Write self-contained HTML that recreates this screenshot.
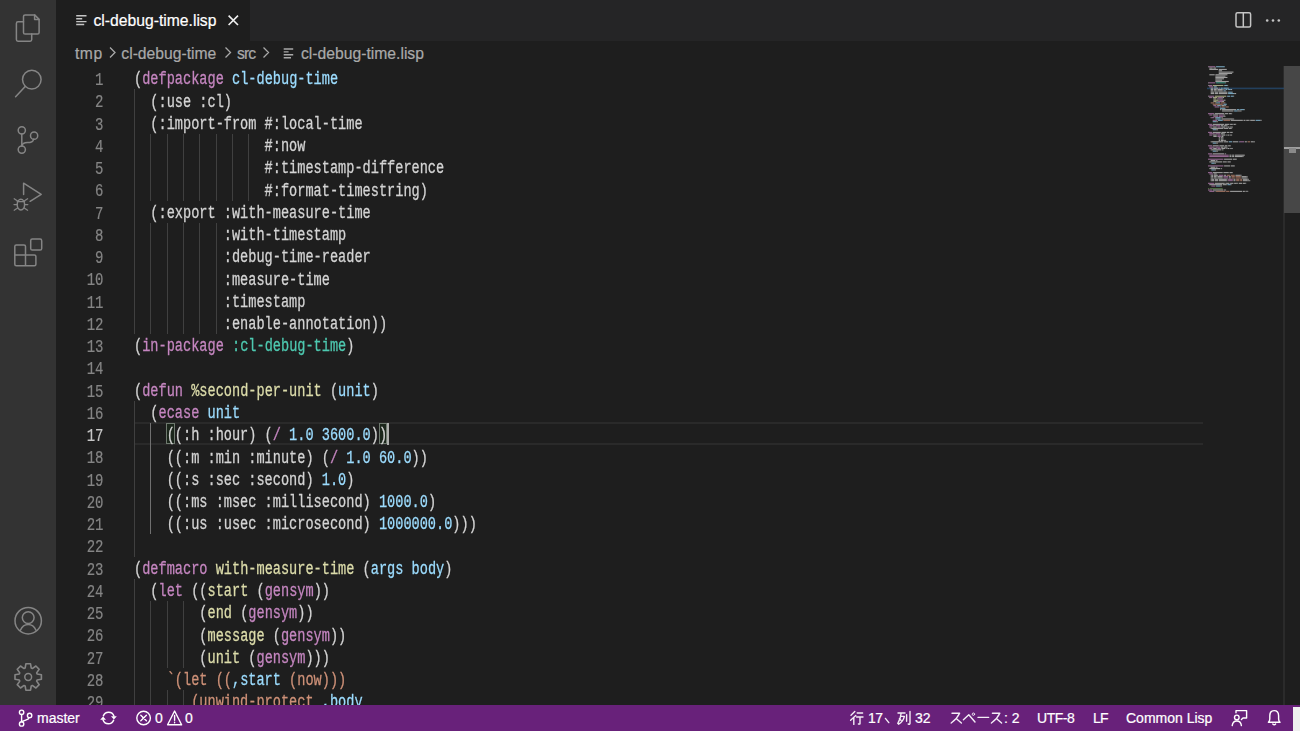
<!DOCTYPE html>
<html><head><meta charset="utf-8">
<style>
*{margin:0;padding:0;box-sizing:border-box}
html,body{width:1300px;height:731px;overflow:hidden;background:#1e1e1e}
body{position:relative;font-family:"Liberation Sans",sans-serif}
.abs{position:absolute}
#act{left:0;top:0;width:56px;height:705px;background:#333333}
#tabs{left:56px;top:0;width:1244px;height:41px;background:#252526}
#tab{left:56px;top:0;width:194px;height:41px;background:#1e1e1e}
#status{left:0;top:705px;width:1300px;height:26px;background:#68217a;color:#fff;font-size:14px}
.ui{position:absolute;font-family:"Liberation Sans",sans-serif;white-space:pre;-webkit-text-stroke:0.2px currentColor}
#code{position:absolute;-webkit-text-stroke:0.3px currentColor;left:134px;top:68.4px;width:1200px;height:700px;font-family:"Liberation Mono",monospace;font-size:18.3px;white-space:pre;color:#d4d4d4;transform-origin:0 0;transform:scaleX(0.74408)}
.ln{position:absolute;left:0;height:22.25px;line-height:22.25px}
.num{left:60px;width:43.5px;text-align:right;font-family:"Liberation Mono",monospace;color:#858585;font-size:17.5px;transform-origin:100% 0;transform:scaleX(0.80);-webkit-text-stroke:0.2px currentColor}
.k{color:#c586c0}.b{color:#9cdcfe}.t{color:#4ec9b0}.y{color:#dcdcaa}.o{color:#ce9178}.n{color:#9cdcfe}
svg{position:absolute;overflow:visible}
</style></head><body>
<div id="act" class="abs"></div>
<div id="tabs" class="abs"></div>
<div id="tab" class="abs"></div>
<div class="ui" style="left:93.5px;top:10.6px;font-size:15.7px;color:#ffffff;line-height:20px">cl-debug-time.lisp</div>
<div class="ui" style="left:75px;top:43.8px;font-size:15.7px;color:#a9a9a9;line-height:20px;letter-spacing:0.5px">tmp</div>
<div class="ui" style="left:121.3px;top:43.8px;font-size:15.7px;color:#a9a9a9;line-height:20px">cl-debug-time</div>
<div class="ui" style="left:237px;top:43.8px;font-size:15.7px;color:#a9a9a9;line-height:20px;letter-spacing:-0.9px">src</div>
<div class="ui" style="left:301px;top:43.8px;font-size:15.7px;color:#a9a9a9;line-height:20px">cl-debug-time.lisp</div>

<svg width="56" height="705" style="left:0;top:0" fill="none" stroke="#858585" stroke-width="1.5" stroke-linejoin="round" stroke-linecap="round">
 <!-- files -->
 <path d="M23.5,21.8 H18 Q16.4,21.8 16.4,23.4 V39.6 Q16.4,41.2 18,41.2 H30.1 Q31.7,41.2 31.7,39.6 V34.1"/>
 <path d="M25.1,14.9 H34.6 L39.1,19.4 V32.5 Q39.1,34.1 37.5,34.1 H25.1 Q23.5,34.1 23.5,32.5 V16.5 Q23.5,14.9 25.1,14.9 Z"/>
 <path d="M34.6,15 V19.6 H39" />
 <!-- search -->
 <circle cx="31.8" cy="79.6" r="9.3"/>
 <path d="M25.2,86.4 L15.6,96.8"/>
 <!-- scm -->
 <circle cx="21.8" cy="130.3" r="3.6"/>
 <circle cx="21.8" cy="149.6" r="3.6"/>
 <circle cx="34.1" cy="135.7" r="3.6"/>
 <path d="M21.8,134 V146"/>
 <path d="M33.6,139.3 C33,142 30.5,142.6 27.5,142.6 C24,142.6 22.3,143.8 21.8,146"/>
 <!-- debug -->
 <path d="M23.6,194.6 V183.2 L41.2,194.3 L30.1,201.3"/>
 <ellipse cx="20.9" cy="204.6" rx="3.7" ry="5.3"/>
 <path d="M17.2,201.6 H24.6 M14.2,198.8 L17.6,201 M27.6,198.8 L24.2,201 M14,204.6 H17 M27.8,204.6 H24.8 M14.2,210.2 L17.6,208 M27.6,210.2 L24.2,208" stroke-width="1.3"/>
 <!-- extensions -->
 <path d="M16.3,244.9 H24 Q25.5,244.9 25.5,246.4 V255 H34.4 Q35.9,255 35.9,256.5 V264.2 Q35.9,265.7 34.4,265.7 H16.3 Q14.8,265.7 14.8,264.2 V246.4 Q14.8,244.9 16.3,244.9 Z M14.8,255 H25.5 V265.7"/>
 <rect x="30.7" y="239.1" width="11" height="11" rx="1.6"/>
 <!-- account -->
 <circle cx="28.2" cy="620.7" r="13.2"/>
 <circle cx="28.2" cy="617.6" r="5.9"/>
 <path d="M20.4,630.2 C22,626.6 25,624.6 28.2,624.6 C31.4,624.6 34.4,626.6 36,630.2"/>
 <!-- gear -->
 <path d="M25.14,668.11 L25.87,663.80 L30.53,663.80 L31.26,668.11 L32.32,668.55 L35.89,666.02 L39.18,669.31 L36.65,672.88 L37.09,673.94 L41.40,674.67 L41.40,679.33 L37.09,680.06 L36.65,681.12 L39.18,684.69 L35.89,687.98 L32.32,685.45 L31.26,685.89 L30.53,690.20 L25.87,690.20 L25.14,685.89 L24.08,685.45 L20.51,687.98 L17.22,684.69 L19.75,681.12 L19.31,680.06 L15.00,679.33 L15.00,674.67 L19.31,673.94 L19.75,672.88 L17.22,669.31 L20.51,666.02 L24.08,668.55Z" stroke-width="1.6"/>
 <circle cx="28.2" cy="677" r="3.4"/>
</svg>
<!-- tab icons -->
<svg width="1300" height="70" style="left:0;top:0" fill="none" stroke-linecap="butt">
 <path d="M76.2,15.8 H86.5 M76.2,18.7 H82.2 M76.2,21.6 H86.5 M76.2,24.5 H84.2" stroke="#c5c5c5" stroke-width="1.4"/>
 <path d="M228.6,15.6 L238,25 M238,15.6 L228.6,25" stroke="#f0f0f0" stroke-width="1.6"/>
 <path d="M283.7,49 H293.2 M283.7,51.9 H288.6 M283.7,54.8 H293.2 M283.7,57.7 H291" stroke="#a9a9a9" stroke-width="1.4"/>
 <path d="M110,47.5 L115,52.5 L110,57.5 M225.5,47.5 L230.5,52.5 L225.5,57.5 M263.5,47.5 L268.5,52.5 L263.5,57.5" stroke="#a9a9a9" stroke-width="1.3"/>
 <rect x="1236" y="12.7" width="14.6" height="14.4" rx="1.5" stroke="#c5c5c5" stroke-width="1.5"/>
 <path d="M1243.3,12.7 V27.1" stroke="#c5c5c5" stroke-width="1.5"/>
 <circle cx="1267.2" cy="20.5" r="1.3" fill="#c5c5c5"/>
 <circle cx="1273" cy="20.5" r="1.3" fill="#c5c5c5"/>
 <circle cx="1278.8" cy="20.5" r="1.3" fill="#c5c5c5"/>
</svg>

<!-- current line highlight -->
<div class="abs" style="left:134.5px;top:422.4px;width:1068px;height:22.4px;border-top:2px solid #2a2a2a;border-bottom:2px solid #2a2a2a"></div>
<div class="abs" style="left:166.2px;top:423px;width:8.6px;height:21.4px;border:1px solid #6f7a6f;background:#1b261b"></div>
<div class="abs" style="left:378.8px;top:423px;width:8.6px;height:21.4px;border:1px solid #6f7a6f;background:#1b261b"></div>
<div class="abs" style="left:387.2px;top:423px;width:2px;height:21.6px;background:#aeafad"></div>
<!-- scrollbar -->
<div class="abs" style="left:1283px;top:66px;width:2px;height:639px;background:#2b2b2b"></div>
<div class="abs" style="left:1284px;top:66px;width:16px;height:146.5px;background:#474747"></div>
<div class="abs" style="left:1284px;top:147px;width:16px;height:1.5px;background:#a0a0a0"></div>
<div class="abs" style="left:1288.5px;top:147.5px;width:7px;height:5px;background:#8a8a8a"></div>
<svg width="1300" height="731" style="left:0;top:0;opacity:0.7;filter:blur(0.3px)"><rect x="1207" y="87.6" width="77" height="1.6" fill="#264f78" opacity="1.4"/><rect x="1208.00" y="66.20" width="0.67" height="1.1" fill="#d4d4d4"/><rect x="1208.67" y="66.20" width="6.70" height="1.1" fill="#c586c0"/><rect x="1216.04" y="66.20" width="8.71" height="1.1" fill="#9cdcfe"/><rect x="1209.34" y="67.54" width="3.35" height="1.1" fill="#d4d4d4"/><rect x="1213.36" y="67.54" width="2.68" height="1.1" fill="#d4d4d4"/><rect x="1209.34" y="68.88" width="8.71" height="1.1" fill="#d4d4d4"/><rect x="1218.72" y="68.88" width="8.04" height="1.1" fill="#d4d4d4"/><rect x="1218.72" y="70.22" width="3.35" height="1.1" fill="#d4d4d4"/><rect x="1218.72" y="71.56" width="14.74" height="1.1" fill="#d4d4d4"/><rect x="1218.72" y="72.90" width="13.40" height="1.1" fill="#d4d4d4"/><rect x="1209.34" y="74.24" width="5.36" height="1.1" fill="#d4d4d4"/><rect x="1215.37" y="74.24" width="12.06" height="1.1" fill="#d4d4d4"/><rect x="1215.37" y="75.58" width="10.05" height="1.1" fill="#d4d4d4"/><rect x="1215.37" y="76.92" width="12.06" height="1.1" fill="#d4d4d4"/><rect x="1215.37" y="78.26" width="8.71" height="1.1" fill="#d4d4d4"/><rect x="1215.37" y="79.60" width="6.70" height="1.1" fill="#d4d4d4"/><rect x="1215.37" y="80.94" width="13.40" height="1.1" fill="#d4d4d4"/><rect x="1208.00" y="82.28" width="0.67" height="1.1" fill="#d4d4d4"/><rect x="1208.67" y="82.28" width="6.70" height="1.1" fill="#c586c0"/><rect x="1216.04" y="82.28" width="9.38" height="1.1" fill="#4ec9b0"/><rect x="1225.42" y="82.28" width="0.67" height="1.1" fill="#d4d4d4"/><rect x="1208.00" y="84.96" width="0.67" height="1.1" fill="#d4d4d4"/><rect x="1208.67" y="84.96" width="3.35" height="1.1" fill="#c586c0"/><rect x="1212.69" y="84.96" width="10.72" height="1.1" fill="#dcdcaa"/><rect x="1224.08" y="84.96" width="0.67" height="1.1" fill="#d4d4d4"/><rect x="1224.75" y="84.96" width="2.68" height="1.1" fill="#9cdcfe"/><rect x="1227.43" y="84.96" width="0.67" height="1.1" fill="#d4d4d4"/><rect x="1209.34" y="86.30" width="0.67" height="1.1" fill="#d4d4d4"/><rect x="1210.01" y="86.30" width="3.35" height="1.1" fill="#c586c0"/><rect x="1214.03" y="86.30" width="2.68" height="1.1" fill="#9cdcfe"/><rect x="1210.68" y="87.64" width="2.68" height="1.1" fill="#d4d4d4"/><rect x="1214.03" y="87.64" width="4.02" height="1.1" fill="#d4d4d4"/><rect x="1218.72" y="87.64" width="0.67" height="1.1" fill="#d4d4d4"/><rect x="1219.39" y="87.64" width="0.67" height="1.1" fill="#c586c0"/><rect x="1220.73" y="87.64" width="2.01" height="1.1" fill="#9cdcfe"/><rect x="1223.41" y="87.64" width="4.02" height="1.1" fill="#9cdcfe"/><rect x="1227.43" y="87.64" width="1.34" height="1.1" fill="#d4d4d4"/><rect x="1210.68" y="88.98" width="2.68" height="1.1" fill="#d4d4d4"/><rect x="1214.03" y="88.98" width="2.68" height="1.1" fill="#d4d4d4"/><rect x="1217.38" y="88.98" width="5.36" height="1.1" fill="#d4d4d4"/><rect x="1223.41" y="88.98" width="0.67" height="1.1" fill="#d4d4d4"/><rect x="1224.08" y="88.98" width="0.67" height="1.1" fill="#c586c0"/><rect x="1225.42" y="88.98" width="2.01" height="1.1" fill="#9cdcfe"/><rect x="1228.10" y="88.98" width="2.68" height="1.1" fill="#9cdcfe"/><rect x="1230.78" y="88.98" width="1.34" height="1.1" fill="#d4d4d4"/><rect x="1210.68" y="90.32" width="2.68" height="1.1" fill="#d4d4d4"/><rect x="1214.03" y="90.32" width="2.68" height="1.1" fill="#d4d4d4"/><rect x="1217.38" y="90.32" width="5.36" height="1.1" fill="#d4d4d4"/><rect x="1223.41" y="90.32" width="2.01" height="1.1" fill="#9cdcfe"/><rect x="1225.42" y="90.32" width="0.67" height="1.1" fill="#d4d4d4"/><rect x="1210.68" y="91.66" width="3.35" height="1.1" fill="#d4d4d4"/><rect x="1214.70" y="91.66" width="3.35" height="1.1" fill="#d4d4d4"/><rect x="1218.72" y="91.66" width="8.71" height="1.1" fill="#d4d4d4"/><rect x="1228.10" y="91.66" width="4.02" height="1.1" fill="#9cdcfe"/><rect x="1232.12" y="91.66" width="0.67" height="1.1" fill="#d4d4d4"/><rect x="1210.68" y="93.00" width="3.35" height="1.1" fill="#d4d4d4"/><rect x="1214.70" y="93.00" width="3.35" height="1.1" fill="#d4d4d4"/><rect x="1218.72" y="93.00" width="8.71" height="1.1" fill="#d4d4d4"/><rect x="1228.10" y="93.00" width="6.03" height="1.1" fill="#9cdcfe"/><rect x="1234.13" y="93.00" width="2.01" height="1.1" fill="#d4d4d4"/><rect x="1208.00" y="95.68" width="0.67" height="1.1" fill="#d4d4d4"/><rect x="1208.67" y="95.68" width="5.36" height="1.1" fill="#c586c0"/><rect x="1214.70" y="95.68" width="11.39" height="1.1" fill="#dcdcaa"/><rect x="1226.76" y="95.68" width="0.67" height="1.1" fill="#d4d4d4"/><rect x="1227.43" y="95.68" width="2.68" height="1.1" fill="#9cdcfe"/><rect x="1230.78" y="95.68" width="2.68" height="1.1" fill="#9cdcfe"/><rect x="1233.46" y="95.68" width="0.67" height="1.1" fill="#d4d4d4"/><rect x="1209.34" y="97.02" width="0.67" height="1.1" fill="#d4d4d4"/><rect x="1210.01" y="97.02" width="2.01" height="1.1" fill="#c586c0"/><rect x="1212.69" y="97.02" width="1.34" height="1.1" fill="#d4d4d4"/><rect x="1214.03" y="97.02" width="3.35" height="1.1" fill="#dcdcaa"/><rect x="1218.05" y="97.02" width="0.67" height="1.1" fill="#d4d4d4"/><rect x="1218.72" y="97.02" width="4.02" height="1.1" fill="#c586c0"/><rect x="1222.74" y="97.02" width="1.34" height="1.1" fill="#d4d4d4"/><rect x="1213.36" y="98.36" width="0.67" height="1.1" fill="#d4d4d4"/><rect x="1214.03" y="98.36" width="2.01" height="1.1" fill="#dcdcaa"/><rect x="1216.71" y="98.36" width="0.67" height="1.1" fill="#d4d4d4"/><rect x="1217.38" y="98.36" width="4.02" height="1.1" fill="#c586c0"/><rect x="1221.40" y="98.36" width="1.34" height="1.1" fill="#d4d4d4"/><rect x="1213.36" y="99.70" width="0.67" height="1.1" fill="#d4d4d4"/><rect x="1214.03" y="99.70" width="4.69" height="1.1" fill="#dcdcaa"/><rect x="1219.39" y="99.70" width="0.67" height="1.1" fill="#d4d4d4"/><rect x="1220.06" y="99.70" width="4.02" height="1.1" fill="#c586c0"/><rect x="1224.08" y="99.70" width="1.34" height="1.1" fill="#d4d4d4"/><rect x="1213.36" y="101.04" width="0.67" height="1.1" fill="#d4d4d4"/><rect x="1214.03" y="101.04" width="2.68" height="1.1" fill="#dcdcaa"/><rect x="1217.38" y="101.04" width="0.67" height="1.1" fill="#d4d4d4"/><rect x="1218.05" y="101.04" width="4.02" height="1.1" fill="#c586c0"/><rect x="1222.07" y="101.04" width="2.01" height="1.1" fill="#d4d4d4"/><rect x="1210.68" y="102.38" width="3.35" height="1.1" fill="#ce9178"/><rect x="1214.70" y="102.38" width="1.34" height="1.1" fill="#ce9178"/><rect x="1216.04" y="102.38" width="4.02" height="1.1" fill="#9cdcfe"/><rect x="1220.73" y="102.38" width="4.69" height="1.1" fill="#ce9178"/><rect x="1212.69" y="103.72" width="10.05" height="1.1" fill="#ce9178"/><rect x="1223.41" y="103.72" width="3.35" height="1.1" fill="#9cdcfe"/><rect x="1213.36" y="105.06" width="2.68" height="1.1" fill="#c586c0"/><rect x="1216.71" y="105.06" width="0.67" height="1.1" fill="#d4d4d4"/><rect x="1217.38" y="105.06" width="0.67" height="1.1" fill="#d4d4d4"/><rect x="1218.05" y="105.06" width="2.68" height="1.1" fill="#9cdcfe"/><rect x="1221.40" y="105.06" width="2.68" height="1.1" fill="#d4d4d4"/><rect x="1224.08" y="105.06" width="0.67" height="1.1" fill="#d4d4d4"/><rect x="1224.75" y="105.06" width="0.67" height="1.1" fill="#d4d4d4"/><rect x="1225.42" y="105.06" width="0.67" height="1.1" fill="#d4d4d4"/><rect x="1214.70" y="106.40" width="4.69" height="1.1" fill="#c586c0"/><rect x="1220.06" y="106.40" width="0.67" height="1.1" fill="#d4d4d4"/><rect x="1221.40" y="106.40" width="3.35" height="1.1" fill="#ce9178"/><rect x="1225.42" y="106.40" width="3.35" height="1.1" fill="#ce9178"/><rect x="1220.06" y="107.74" width="5.36" height="1.1" fill="#9cdcfe"/><rect x="1220.06" y="109.08" width="1.34" height="1.1" fill="#d4d4d4"/><rect x="1222.07" y="109.08" width="14.07" height="1.1" fill="#d4d4d4"/><rect x="1236.81" y="109.08" width="2.68" height="1.1" fill="#9cdcfe"/><rect x="1240.16" y="109.08" width="4.02" height="1.1" fill="#9cdcfe"/><rect x="1244.18" y="109.08" width="0.67" height="1.1" fill="#d4d4d4"/><rect x="1222.07" y="110.42" width="11.39" height="1.1" fill="#d4d4d4"/><rect x="1234.13" y="110.42" width="3.35" height="1.1" fill="#9cdcfe"/><rect x="1237.48" y="110.42" width="0.67" height="1.1" fill="#d4d4d4"/><rect x="1238.15" y="110.42" width="0.67" height="1.1" fill="#d4d4d4"/><rect x="1238.82" y="110.42" width="0.67" height="1.1" fill="#d4d4d4"/><rect x="1239.49" y="110.42" width="0.67" height="1.1" fill="#d4d4d4"/><rect x="1240.16" y="110.42" width="0.67" height="1.1" fill="#d4d4d4"/><rect x="1240.83" y="110.42" width="0.67" height="1.1" fill="#d4d4d4"/><rect x="1208.00" y="113.10" width="6.03" height="1.1" fill="#c586c0"/><rect x="1214.70" y="113.10" width="9.38" height="1.1" fill="#d4d4d4"/><rect x="1224.75" y="113.10" width="3.35" height="1.1" fill="#d4d4d4"/><rect x="1228.77" y="113.10" width="2.68" height="1.1" fill="#d4d4d4"/><rect x="1231.45" y="113.10" width="0.67" height="1.1" fill="#d4d4d4"/><rect x="1209.34" y="114.44" width="2.68" height="1.1" fill="#c586c0"/><rect x="1212.69" y="114.44" width="0.67" height="1.1" fill="#d4d4d4"/><rect x="1213.36" y="114.44" width="4.69" height="1.1" fill="#d4d4d4"/><rect x="1218.72" y="114.44" width="4.69" height="1.1" fill="#c586c0"/><rect x="1223.41" y="114.44" width="0.67" height="1.1" fill="#d4d4d4"/><rect x="1224.08" y="114.44" width="0.67" height="1.1" fill="#d4d4d4"/><rect x="1213.36" y="115.78" width="4.69" height="1.1" fill="#c586c0"/><rect x="1218.72" y="115.78" width="4.69" height="1.1" fill="#c586c0"/><rect x="1223.41" y="115.78" width="0.67" height="1.1" fill="#d4d4d4"/><rect x="1224.08" y="115.78" width="0.67" height="1.1" fill="#d4d4d4"/><rect x="1224.75" y="115.78" width="0.67" height="1.1" fill="#d4d4d4"/><rect x="1210.68" y="117.12" width="0.67" height="1.1" fill="#d4d4d4"/><rect x="1211.35" y="117.12" width="2.68" height="1.1" fill="#c586c0"/><rect x="1214.70" y="117.12" width="0.67" height="1.1" fill="#d4d4d4"/><rect x="1215.37" y="117.12" width="0.67" height="1.1" fill="#d4d4d4"/><rect x="1216.04" y="117.12" width="4.69" height="1.1" fill="#9cdcfe"/><rect x="1221.40" y="117.12" width="0.67" height="1.1" fill="#d4d4d4"/><rect x="1222.07" y="117.12" width="0.67" height="1.1" fill="#d4d4d4"/><rect x="1215.37" y="118.46" width="0.67" height="1.1" fill="#d4d4d4"/><rect x="1216.04" y="118.46" width="4.69" height="1.1" fill="#9cdcfe"/><rect x="1221.40" y="118.46" width="11.39" height="1.1" fill="#d4d4d4"/><rect x="1232.79" y="118.46" width="0.67" height="1.1" fill="#d4d4d4"/><rect x="1233.46" y="118.46" width="0.67" height="1.1" fill="#d4d4d4"/><rect x="1212.69" y="119.80" width="4.69" height="1.1" fill="#c586c0"/><rect x="1218.05" y="119.80" width="4.69" height="1.1" fill="#9cdcfe"/><rect x="1223.41" y="119.80" width="6.70" height="1.1" fill="#ce9178"/><rect x="1230.78" y="119.80" width="12.06" height="1.1" fill="#d4d4d4"/><rect x="1243.51" y="119.80" width="2.01" height="1.1" fill="#d4d4d4"/><rect x="1246.19" y="119.80" width="2.68" height="1.1" fill="#d4d4d4"/><rect x="1248.87" y="119.80" width="0.67" height="1.1" fill="#d4d4d4"/><rect x="1250.21" y="119.80" width="4.69" height="1.1" fill="#d4d4d4"/><rect x="1255.57" y="119.80" width="4.69" height="1.1" fill="#9cdcfe"/><rect x="1260.26" y="119.80" width="0.67" height="1.1" fill="#d4d4d4"/><rect x="1260.93" y="119.80" width="0.67" height="1.1" fill="#d4d4d4"/><rect x="1212.69" y="121.14" width="3.35" height="1.1" fill="#9cdcfe"/><rect x="1216.04" y="121.14" width="0.67" height="1.1" fill="#d4d4d4"/><rect x="1216.71" y="121.14" width="0.67" height="1.1" fill="#d4d4d4"/><rect x="1217.38" y="121.14" width="0.67" height="1.1" fill="#d4d4d4"/><rect x="1208.00" y="123.82" width="4.02" height="1.1" fill="#c586c0"/><rect x="1212.69" y="123.82" width="11.39" height="1.1" fill="#d4d4d4"/><rect x="1224.75" y="123.82" width="4.69" height="1.1" fill="#d4d4d4"/><rect x="1230.11" y="123.82" width="2.68" height="1.1" fill="#d4d4d4"/><rect x="1233.46" y="123.82" width="2.01" height="1.1" fill="#d4d4d4"/><rect x="1235.47" y="123.82" width="0.67" height="1.1" fill="#d4d4d4"/><rect x="1209.34" y="125.16" width="5.36" height="1.1" fill="#c586c0"/><rect x="1215.37" y="125.16" width="4.69" height="1.1" fill="#c586c0"/><rect x="1220.73" y="125.16" width="2.68" height="1.1" fill="#d4d4d4"/><rect x="1224.08" y="125.16" width="2.01" height="1.1" fill="#d4d4d4"/><rect x="1226.09" y="125.16" width="0.67" height="1.1" fill="#d4d4d4"/><rect x="1226.76" y="125.16" width="0.67" height="1.1" fill="#d4d4d4"/><rect x="1209.34" y="126.50" width="2.68" height="1.1" fill="#c586c0"/><rect x="1212.69" y="126.50" width="0.67" height="1.1" fill="#d4d4d4"/><rect x="1213.36" y="126.50" width="3.35" height="1.1" fill="#d4d4d4"/><rect x="1217.38" y="126.50" width="3.35" height="1.1" fill="#c586c0"/><rect x="1221.40" y="126.50" width="4.02" height="1.1" fill="#d4d4d4"/><rect x="1226.09" y="126.50" width="0.67" height="1.1" fill="#d4d4d4"/><rect x="1227.43" y="126.50" width="2.01" height="1.1" fill="#d4d4d4"/><rect x="1230.11" y="126.50" width="0.67" height="1.1" fill="#d4d4d4"/><rect x="1230.78" y="126.50" width="0.67" height="1.1" fill="#d4d4d4"/><rect x="1231.45" y="126.50" width="0.67" height="1.1" fill="#d4d4d4"/><rect x="1232.12" y="126.50" width="0.67" height="1.1" fill="#d4d4d4"/><rect x="1210.68" y="127.84" width="0.67" height="1.1" fill="#d4d4d4"/><rect x="1211.35" y="127.84" width="12.06" height="1.1" fill="#d4d4d4"/><rect x="1224.08" y="127.84" width="4.02" height="1.1" fill="#d4d4d4"/><rect x="1228.77" y="127.84" width="2.68" height="1.1" fill="#d4d4d4"/><rect x="1231.45" y="127.84" width="0.67" height="1.1" fill="#d4d4d4"/><rect x="1212.69" y="129.18" width="3.35" height="1.1" fill="#9cdcfe"/><rect x="1216.04" y="129.18" width="0.67" height="1.1" fill="#d4d4d4"/><rect x="1216.71" y="129.18" width="0.67" height="1.1" fill="#d4d4d4"/><rect x="1217.38" y="129.18" width="0.67" height="1.1" fill="#d4d4d4"/><rect x="1208.00" y="131.86" width="4.02" height="1.1" fill="#c586c0"/><rect x="1212.69" y="131.86" width="8.04" height="1.1" fill="#d4d4d4"/><rect x="1221.40" y="131.86" width="4.69" height="1.1" fill="#d4d4d4"/><rect x="1226.76" y="131.86" width="2.68" height="1.1" fill="#d4d4d4"/><rect x="1230.11" y="131.86" width="2.01" height="1.1" fill="#d4d4d4"/><rect x="1232.12" y="131.86" width="0.67" height="1.1" fill="#d4d4d4"/><rect x="1209.34" y="133.20" width="5.36" height="1.1" fill="#c586c0"/><rect x="1215.37" y="133.20" width="4.69" height="1.1" fill="#c586c0"/><rect x="1220.73" y="133.20" width="2.68" height="1.1" fill="#d4d4d4"/><rect x="1223.41" y="133.20" width="0.67" height="1.1" fill="#d4d4d4"/><rect x="1224.08" y="133.20" width="0.67" height="1.1" fill="#d4d4d4"/><rect x="1209.34" y="134.54" width="2.68" height="1.1" fill="#c586c0"/><rect x="1212.69" y="134.54" width="0.67" height="1.1" fill="#d4d4d4"/><rect x="1213.36" y="134.54" width="3.35" height="1.1" fill="#d4d4d4"/><rect x="1217.38" y="134.54" width="3.35" height="1.1" fill="#c586c0"/><rect x="1221.40" y="134.54" width="4.02" height="1.1" fill="#d4d4d4"/><rect x="1226.09" y="134.54" width="0.67" height="1.1" fill="#d4d4d4"/><rect x="1227.43" y="134.54" width="2.01" height="1.1" fill="#d4d4d4"/><rect x="1230.11" y="134.54" width="0.67" height="1.1" fill="#d4d4d4"/><rect x="1230.78" y="134.54" width="0.67" height="1.1" fill="#d4d4d4"/><rect x="1231.45" y="134.54" width="0.67" height="1.1" fill="#d4d4d4"/><rect x="1213.36" y="135.88" width="3.35" height="1.1" fill="#d4d4d4"/><rect x="1217.38" y="135.88" width="3.35" height="1.1" fill="#c586c0"/><rect x="1221.40" y="135.88" width="2.01" height="1.1" fill="#d4d4d4"/><rect x="1218.72" y="137.22" width="1.34" height="1.1" fill="#d4d4d4"/><rect x="1220.73" y="137.22" width="2.01" height="1.1" fill="#d4d4d4"/><rect x="1222.74" y="137.22" width="0.67" height="1.1" fill="#d4d4d4"/><rect x="1218.72" y="138.56" width="1.34" height="1.1" fill="#d4d4d4"/><rect x="1220.73" y="138.56" width="2.01" height="1.1" fill="#d4d4d4"/><rect x="1222.74" y="138.56" width="0.67" height="1.1" fill="#d4d4d4"/><rect x="1218.72" y="139.90" width="1.34" height="1.1" fill="#d4d4d4"/><rect x="1220.73" y="139.90" width="2.68" height="1.1" fill="#d4d4d4"/><rect x="1223.41" y="139.90" width="0.67" height="1.1" fill="#d4d4d4"/><rect x="1224.08" y="139.90" width="0.67" height="1.1" fill="#d4d4d4"/><rect x="1224.75" y="139.90" width="0.67" height="1.1" fill="#d4d4d4"/><rect x="1225.42" y="139.90" width="0.67" height="1.1" fill="#d4d4d4"/><rect x="1210.68" y="141.24" width="0.67" height="1.1" fill="#d4d4d4"/><rect x="1211.35" y="141.24" width="12.06" height="1.1" fill="#d4d4d4"/><rect x="1224.08" y="141.24" width="4.02" height="1.1" fill="#d4d4d4"/><rect x="1228.77" y="141.24" width="3.35" height="1.1" fill="#9cdcfe"/><rect x="1232.79" y="141.24" width="5.36" height="1.1" fill="#d4d4d4"/><rect x="1238.82" y="141.24" width="0.67" height="1.1" fill="#9cdcfe"/><rect x="1239.49" y="141.24" width="4.69" height="1.1" fill="#c586c0"/><rect x="1244.85" y="141.24" width="2.01" height="1.1" fill="#d4d4d4"/><rect x="1247.53" y="141.24" width="2.68" height="1.1" fill="#ce9178"/><rect x="1250.88" y="141.24" width="2.68" height="1.1" fill="#d4d4d4"/><rect x="1253.56" y="141.24" width="0.67" height="1.1" fill="#d4d4d4"/><rect x="1254.23" y="141.24" width="0.67" height="1.1" fill="#d4d4d4"/><rect x="1212.69" y="142.58" width="3.35" height="1.1" fill="#9cdcfe"/><rect x="1216.04" y="142.58" width="0.67" height="1.1" fill="#d4d4d4"/><rect x="1216.71" y="142.58" width="0.67" height="1.1" fill="#d4d4d4"/><rect x="1217.38" y="142.58" width="0.67" height="1.1" fill="#d4d4d4"/><rect x="1208.00" y="145.26" width="4.02" height="1.1" fill="#c586c0"/><rect x="1212.69" y="145.26" width="6.03" height="1.1" fill="#d4d4d4"/><rect x="1219.39" y="145.26" width="4.69" height="1.1" fill="#d4d4d4"/><rect x="1224.75" y="145.26" width="2.68" height="1.1" fill="#d4d4d4"/><rect x="1228.10" y="145.26" width="2.01" height="1.1" fill="#d4d4d4"/><rect x="1230.11" y="145.26" width="0.67" height="1.1" fill="#d4d4d4"/><rect x="1209.34" y="146.60" width="5.36" height="1.1" fill="#c586c0"/><rect x="1215.37" y="146.60" width="4.69" height="1.1" fill="#c586c0"/><rect x="1220.73" y="146.60" width="2.68" height="1.1" fill="#d4d4d4"/><rect x="1224.08" y="146.60" width="2.01" height="1.1" fill="#d4d4d4"/><rect x="1226.09" y="146.60" width="0.67" height="1.1" fill="#d4d4d4"/><rect x="1226.76" y="146.60" width="0.67" height="1.1" fill="#d4d4d4"/><rect x="1209.34" y="147.94" width="2.68" height="1.1" fill="#c586c0"/><rect x="1212.69" y="147.94" width="0.67" height="1.1" fill="#d4d4d4"/><rect x="1213.36" y="147.94" width="3.35" height="1.1" fill="#d4d4d4"/><rect x="1217.38" y="147.94" width="3.35" height="1.1" fill="#c586c0"/><rect x="1221.40" y="147.94" width="4.02" height="1.1" fill="#d4d4d4"/><rect x="1226.09" y="147.94" width="0.67" height="1.1" fill="#d4d4d4"/><rect x="1227.43" y="147.94" width="2.01" height="1.1" fill="#d4d4d4"/><rect x="1230.11" y="147.94" width="0.67" height="1.1" fill="#d4d4d4"/><rect x="1230.78" y="147.94" width="0.67" height="1.1" fill="#d4d4d4"/><rect x="1231.45" y="147.94" width="0.67" height="1.1" fill="#d4d4d4"/><rect x="1232.12" y="147.94" width="0.67" height="1.1" fill="#d4d4d4"/><rect x="1210.68" y="149.28" width="0.67" height="1.1" fill="#d4d4d4"/><rect x="1211.35" y="149.28" width="10.05" height="1.1" fill="#d4d4d4"/><rect x="1222.07" y="149.28" width="0.67" height="1.1" fill="#d4d4d4"/><rect x="1222.74" y="149.28" width="0.67" height="1.1" fill="#d4d4d4"/><rect x="1212.69" y="150.62" width="3.35" height="1.1" fill="#9cdcfe"/><rect x="1216.04" y="150.62" width="0.67" height="1.1" fill="#d4d4d4"/><rect x="1216.71" y="150.62" width="0.67" height="1.1" fill="#d4d4d4"/><rect x="1217.38" y="150.62" width="0.67" height="1.1" fill="#d4d4d4"/><rect x="1208.00" y="153.30" width="4.02" height="1.1" fill="#c586c0"/><rect x="1212.69" y="153.30" width="11.39" height="1.1" fill="#d4d4d4"/><rect x="1224.75" y="153.30" width="0.67" height="1.1" fill="#d4d4d4"/><rect x="1225.42" y="153.30" width="0.67" height="1.1" fill="#d4d4d4"/><rect x="1209.34" y="154.64" width="19.43" height="1.1" fill="#c586c0"/><rect x="1229.44" y="154.64" width="2.01" height="1.1" fill="#d4d4d4"/><rect x="1232.12" y="154.64" width="2.01" height="1.1" fill="#d4d4d4"/><rect x="1234.80" y="154.64" width="9.38" height="1.1" fill="#d4d4d4"/><rect x="1244.18" y="154.64" width="0.67" height="1.1" fill="#d4d4d4"/><rect x="1209.34" y="155.98" width="19.43" height="1.1" fill="#c586c0"/><rect x="1229.44" y="155.98" width="2.01" height="1.1" fill="#d4d4d4"/><rect x="1232.12" y="155.98" width="2.01" height="1.1" fill="#d4d4d4"/><rect x="1234.80" y="155.98" width="7.37" height="1.1" fill="#d4d4d4"/><rect x="1242.17" y="155.98" width="0.67" height="1.1" fill="#d4d4d4"/><rect x="1242.84" y="155.98" width="0.67" height="1.1" fill="#d4d4d4"/><rect x="1208.00" y="158.66" width="15.41" height="1.1" fill="#c586c0"/><rect x="1224.08" y="158.66" width="8.04" height="1.1" fill="#d4d4d4"/><rect x="1232.79" y="158.66" width="3.35" height="1.1" fill="#d4d4d4"/><rect x="1236.14" y="158.66" width="0.67" height="1.1" fill="#d4d4d4"/><rect x="1210.68" y="160.00" width="4.69" height="1.1" fill="#d4d4d4"/><rect x="1216.04" y="160.00" width="0.67" height="1.1" fill="#d4d4d4"/><rect x="1216.71" y="160.00" width="0.67" height="1.1" fill="#d4d4d4"/><rect x="1209.34" y="161.34" width="0.67" height="1.1" fill="#d4d4d4"/><rect x="1210.01" y="161.34" width="12.06" height="1.1" fill="#d4d4d4"/><rect x="1222.74" y="161.34" width="4.02" height="1.1" fill="#d4d4d4"/><rect x="1227.43" y="161.34" width="2.68" height="1.1" fill="#d4d4d4"/><rect x="1230.11" y="161.34" width="0.67" height="1.1" fill="#d4d4d4"/><rect x="1211.35" y="162.68" width="3.35" height="1.1" fill="#9cdcfe"/><rect x="1214.70" y="162.68" width="0.67" height="1.1" fill="#d4d4d4"/><rect x="1215.37" y="162.68" width="0.67" height="1.1" fill="#d4d4d4"/><rect x="1208.00" y="165.36" width="15.41" height="1.1" fill="#c586c0"/><rect x="1224.08" y="165.36" width="6.03" height="1.1" fill="#d4d4d4"/><rect x="1230.78" y="165.36" width="3.35" height="1.1" fill="#d4d4d4"/><rect x="1234.13" y="165.36" width="0.67" height="1.1" fill="#d4d4d4"/><rect x="1210.68" y="166.70" width="4.69" height="1.1" fill="#d4d4d4"/><rect x="1216.04" y="166.70" width="0.67" height="1.1" fill="#d4d4d4"/><rect x="1216.71" y="166.70" width="0.67" height="1.1" fill="#d4d4d4"/><rect x="1209.34" y="168.04" width="0.67" height="1.1" fill="#d4d4d4"/><rect x="1210.01" y="168.04" width="10.05" height="1.1" fill="#d4d4d4"/><rect x="1220.73" y="168.04" width="0.67" height="1.1" fill="#d4d4d4"/><rect x="1221.40" y="168.04" width="0.67" height="1.1" fill="#d4d4d4"/><rect x="1211.35" y="169.38" width="3.35" height="1.1" fill="#9cdcfe"/><rect x="1214.70" y="169.38" width="0.67" height="1.1" fill="#d4d4d4"/><rect x="1215.37" y="169.38" width="0.67" height="1.1" fill="#d4d4d4"/><rect x="1208.00" y="172.06" width="4.02" height="1.1" fill="#c586c0"/><rect x="1212.69" y="172.06" width="10.05" height="1.1" fill="#d4d4d4"/><rect x="1223.41" y="172.06" width="5.36" height="1.1" fill="#d4d4d4"/><rect x="1229.44" y="172.06" width="2.68" height="1.1" fill="#d4d4d4"/><rect x="1232.12" y="172.06" width="0.67" height="1.1" fill="#d4d4d4"/><rect x="1209.34" y="173.40" width="4.02" height="1.1" fill="#c586c0"/><rect x="1214.03" y="173.40" width="2.68" height="1.1" fill="#d4d4d4"/><rect x="1210.68" y="174.74" width="0.67" height="1.1" fill="#d4d4d4"/><rect x="1211.35" y="174.74" width="2.01" height="1.1" fill="#d4d4d4"/><rect x="1214.03" y="174.74" width="3.35" height="1.1" fill="#d4d4d4"/><rect x="1217.38" y="174.74" width="0.67" height="1.1" fill="#d4d4d4"/><rect x="1218.72" y="174.74" width="4.69" height="1.1" fill="#c586c0"/><rect x="1224.08" y="174.74" width="2.01" height="1.1" fill="#d4d4d4"/><rect x="1226.76" y="174.74" width="3.35" height="1.1" fill="#ce9178"/><rect x="1230.78" y="174.74" width="4.02" height="1.1" fill="#ce9178"/><rect x="1235.47" y="174.74" width="4.69" height="1.1" fill="#d4d4d4"/><rect x="1240.16" y="174.74" width="0.67" height="1.1" fill="#d4d4d4"/><rect x="1240.83" y="174.74" width="0.67" height="1.1" fill="#d4d4d4"/><rect x="1210.68" y="176.08" width="0.67" height="1.1" fill="#d4d4d4"/><rect x="1211.35" y="176.08" width="2.01" height="1.1" fill="#d4d4d4"/><rect x="1214.03" y="176.08" width="2.68" height="1.1" fill="#d4d4d4"/><rect x="1217.38" y="176.08" width="4.69" height="1.1" fill="#d4d4d4"/><rect x="1222.07" y="176.08" width="0.67" height="1.1" fill="#d4d4d4"/><rect x="1223.41" y="176.08" width="4.69" height="1.1" fill="#c586c0"/><rect x="1228.77" y="176.08" width="2.01" height="1.1" fill="#d4d4d4"/><rect x="1231.45" y="176.08" width="3.35" height="1.1" fill="#ce9178"/><rect x="1235.47" y="176.08" width="5.36" height="1.1" fill="#ce9178"/><rect x="1241.50" y="176.08" width="4.69" height="1.1" fill="#d4d4d4"/><rect x="1246.19" y="176.08" width="0.67" height="1.1" fill="#d4d4d4"/><rect x="1246.86" y="176.08" width="0.67" height="1.1" fill="#d4d4d4"/><rect x="1210.68" y="177.42" width="0.67" height="1.1" fill="#d4d4d4"/><rect x="1211.35" y="177.42" width="2.01" height="1.1" fill="#d4d4d4"/><rect x="1214.03" y="177.42" width="2.68" height="1.1" fill="#d4d4d4"/><rect x="1217.38" y="177.42" width="4.69" height="1.1" fill="#d4d4d4"/><rect x="1222.07" y="177.42" width="0.67" height="1.1" fill="#d4d4d4"/><rect x="1223.41" y="177.42" width="4.69" height="1.1" fill="#c586c0"/><rect x="1228.77" y="177.42" width="2.01" height="1.1" fill="#d4d4d4"/><rect x="1231.45" y="177.42" width="3.35" height="1.1" fill="#ce9178"/><rect x="1235.47" y="177.42" width="5.36" height="1.1" fill="#ce9178"/><rect x="1241.50" y="177.42" width="4.69" height="1.1" fill="#d4d4d4"/><rect x="1246.19" y="177.42" width="0.67" height="1.1" fill="#d4d4d4"/><rect x="1246.86" y="177.42" width="0.67" height="1.1" fill="#d4d4d4"/><rect x="1210.68" y="178.76" width="0.67" height="1.1" fill="#d4d4d4"/><rect x="1211.35" y="178.76" width="2.68" height="1.1" fill="#d4d4d4"/><rect x="1214.70" y="178.76" width="3.35" height="1.1" fill="#d4d4d4"/><rect x="1218.72" y="178.76" width="8.04" height="1.1" fill="#d4d4d4"/><rect x="1226.76" y="178.76" width="0.67" height="1.1" fill="#d4d4d4"/><rect x="1228.10" y="178.76" width="4.69" height="1.1" fill="#c586c0"/><rect x="1233.46" y="178.76" width="2.01" height="1.1" fill="#d4d4d4"/><rect x="1236.14" y="178.76" width="3.35" height="1.1" fill="#ce9178"/><rect x="1240.16" y="178.76" width="2.01" height="1.1" fill="#ce9178"/><rect x="1242.84" y="178.76" width="4.69" height="1.1" fill="#d4d4d4"/><rect x="1247.53" y="178.76" width="0.67" height="1.1" fill="#d4d4d4"/><rect x="1248.20" y="178.76" width="0.67" height="1.1" fill="#d4d4d4"/><rect x="1210.68" y="180.10" width="0.67" height="1.1" fill="#d4d4d4"/><rect x="1211.35" y="180.10" width="2.68" height="1.1" fill="#d4d4d4"/><rect x="1214.70" y="180.10" width="3.35" height="1.1" fill="#d4d4d4"/><rect x="1218.72" y="180.10" width="8.04" height="1.1" fill="#d4d4d4"/><rect x="1226.76" y="180.10" width="0.67" height="1.1" fill="#d4d4d4"/><rect x="1228.10" y="180.10" width="4.69" height="1.1" fill="#c586c0"/><rect x="1233.46" y="180.10" width="2.01" height="1.1" fill="#d4d4d4"/><rect x="1236.14" y="180.10" width="3.35" height="1.1" fill="#ce9178"/><rect x="1240.16" y="180.10" width="2.01" height="1.1" fill="#ce9178"/><rect x="1242.84" y="180.10" width="4.69" height="1.1" fill="#d4d4d4"/><rect x="1247.53" y="180.10" width="0.67" height="1.1" fill="#d4d4d4"/><rect x="1248.20" y="180.10" width="0.67" height="1.1" fill="#d4d4d4"/><rect x="1248.87" y="180.10" width="0.67" height="1.1" fill="#d4d4d4"/><rect x="1249.54" y="180.10" width="0.67" height="1.1" fill="#d4d4d4"/><rect x="1208.00" y="182.78" width="6.03" height="1.1" fill="#c586c0"/><rect x="1214.70" y="182.78" width="10.05" height="1.1" fill="#d4d4d4"/><rect x="1225.42" y="182.78" width="0.67" height="1.1" fill="#d4d4d4"/><rect x="1226.09" y="182.78" width="3.35" height="1.1" fill="#d4d4d4"/><rect x="1230.11" y="182.78" width="3.35" height="1.1" fill="#d4d4d4"/><rect x="1234.13" y="182.78" width="2.68" height="1.1" fill="#d4d4d4"/><rect x="1236.81" y="182.78" width="0.67" height="1.1" fill="#d4d4d4"/><rect x="1237.48" y="182.78" width="0.67" height="1.1" fill="#d4d4d4"/><rect x="1238.82" y="182.78" width="3.35" height="1.1" fill="#d4d4d4"/><rect x="1242.84" y="182.78" width="2.68" height="1.1" fill="#d4d4d4"/><rect x="1245.52" y="182.78" width="0.67" height="1.1" fill="#d4d4d4"/><rect x="1209.34" y="184.12" width="0.67" height="1.1" fill="#d4d4d4"/><rect x="1210.01" y="184.12" width="12.06" height="1.1" fill="#d4d4d4"/><rect x="1222.74" y="184.12" width="4.02" height="1.1" fill="#d4d4d4"/><rect x="1227.43" y="184.12" width="3.35" height="1.1" fill="#9cdcfe"/><rect x="1230.78" y="184.12" width="0.67" height="1.1" fill="#d4d4d4"/><rect x="1211.35" y="185.46" width="4.02" height="1.1" fill="#c586c0"/><rect x="1216.04" y="185.46" width="4.02" height="1.1" fill="#9cdcfe"/><rect x="1220.06" y="185.46" width="0.67" height="1.1" fill="#d4d4d4"/><rect x="1220.73" y="185.46" width="0.67" height="1.1" fill="#d4d4d4"/><rect x="1221.40" y="185.46" width="0.67" height="1.1" fill="#d4d4d4"/><rect x="1208.00" y="188.14" width="1.34" height="1.1" fill="#6a9955"/><rect x="1210.01" y="188.14" width="12.73" height="1.1" fill="#6a9955"/><rect x="1208.00" y="189.48" width="4.02" height="1.1" fill="#c586c0"/><rect x="1212.69" y="189.48" width="10.72" height="1.1" fill="#d4d4d4"/><rect x="1224.08" y="189.48" width="1.34" height="1.1" fill="#d4d4d4"/><rect x="1225.42" y="189.48" width="0.67" height="1.1" fill="#d4d4d4"/><rect x="1209.34" y="190.82" width="4.69" height="1.1" fill="#c586c0"/><rect x="1214.70" y="190.82" width="0.67" height="1.1" fill="#d4d4d4"/><rect x="1216.04" y="190.82" width="9.38" height="1.1" fill="#ce9178"/><rect x="1226.09" y="190.82" width="3.35" height="1.1" fill="#ce9178"/><rect x="1230.11" y="190.82" width="12.06" height="1.1" fill="#d4d4d4"/><rect x="1242.84" y="190.82" width="2.01" height="1.1" fill="#d4d4d4"/><rect x="1245.52" y="190.82" width="0.67" height="1.1" fill="#d4d4d4"/><rect x="1246.19" y="190.82" width="0.67" height="1.1" fill="#d4d4d4"/><rect x="1246.86" y="190.82" width="0.67" height="1.1" fill="#d4d4d4"/><rect x="1247.53" y="190.82" width="0.67" height="1.1" fill="#d4d4d4"/></svg>
<div class="abs" style="left:134.00px;top:89.25px;width:1px;height:22.25px;background:#404040"></div>
<div class="abs" style="left:134.00px;top:111.50px;width:1px;height:22.25px;background:#404040"></div>
<div class="abs" style="left:134.00px;top:133.75px;width:1px;height:22.25px;background:#404040"></div>
<div class="abs" style="left:150.34px;top:133.75px;width:1px;height:22.25px;background:#404040"></div>
<div class="abs" style="left:166.68px;top:133.75px;width:1px;height:22.25px;background:#404040"></div>
<div class="abs" style="left:183.02px;top:133.75px;width:1px;height:22.25px;background:#404040"></div>
<div class="abs" style="left:199.36px;top:133.75px;width:1px;height:22.25px;background:#404040"></div>
<div class="abs" style="left:215.70px;top:133.75px;width:1px;height:22.25px;background:#404040"></div>
<div class="abs" style="left:232.04px;top:133.75px;width:1px;height:22.25px;background:#404040"></div>
<div class="abs" style="left:248.38px;top:133.75px;width:1px;height:22.25px;background:#404040"></div>
<div class="abs" style="left:134.00px;top:156.00px;width:1px;height:22.25px;background:#404040"></div>
<div class="abs" style="left:150.34px;top:156.00px;width:1px;height:22.25px;background:#404040"></div>
<div class="abs" style="left:166.68px;top:156.00px;width:1px;height:22.25px;background:#404040"></div>
<div class="abs" style="left:183.02px;top:156.00px;width:1px;height:22.25px;background:#404040"></div>
<div class="abs" style="left:199.36px;top:156.00px;width:1px;height:22.25px;background:#404040"></div>
<div class="abs" style="left:215.70px;top:156.00px;width:1px;height:22.25px;background:#404040"></div>
<div class="abs" style="left:232.04px;top:156.00px;width:1px;height:22.25px;background:#404040"></div>
<div class="abs" style="left:248.38px;top:156.00px;width:1px;height:22.25px;background:#404040"></div>
<div class="abs" style="left:134.00px;top:178.25px;width:1px;height:22.25px;background:#404040"></div>
<div class="abs" style="left:150.34px;top:178.25px;width:1px;height:22.25px;background:#404040"></div>
<div class="abs" style="left:166.68px;top:178.25px;width:1px;height:22.25px;background:#404040"></div>
<div class="abs" style="left:183.02px;top:178.25px;width:1px;height:22.25px;background:#404040"></div>
<div class="abs" style="left:199.36px;top:178.25px;width:1px;height:22.25px;background:#404040"></div>
<div class="abs" style="left:215.70px;top:178.25px;width:1px;height:22.25px;background:#404040"></div>
<div class="abs" style="left:232.04px;top:178.25px;width:1px;height:22.25px;background:#404040"></div>
<div class="abs" style="left:248.38px;top:178.25px;width:1px;height:22.25px;background:#404040"></div>
<div class="abs" style="left:134.00px;top:200.50px;width:1px;height:22.25px;background:#404040"></div>
<div class="abs" style="left:134.00px;top:222.75px;width:1px;height:22.25px;background:#404040"></div>
<div class="abs" style="left:150.34px;top:222.75px;width:1px;height:22.25px;background:#404040"></div>
<div class="abs" style="left:166.68px;top:222.75px;width:1px;height:22.25px;background:#404040"></div>
<div class="abs" style="left:183.02px;top:222.75px;width:1px;height:22.25px;background:#404040"></div>
<div class="abs" style="left:199.36px;top:222.75px;width:1px;height:22.25px;background:#404040"></div>
<div class="abs" style="left:215.70px;top:222.75px;width:1px;height:22.25px;background:#404040"></div>
<div class="abs" style="left:134.00px;top:245.00px;width:1px;height:22.25px;background:#404040"></div>
<div class="abs" style="left:150.34px;top:245.00px;width:1px;height:22.25px;background:#404040"></div>
<div class="abs" style="left:166.68px;top:245.00px;width:1px;height:22.25px;background:#404040"></div>
<div class="abs" style="left:183.02px;top:245.00px;width:1px;height:22.25px;background:#404040"></div>
<div class="abs" style="left:199.36px;top:245.00px;width:1px;height:22.25px;background:#404040"></div>
<div class="abs" style="left:215.70px;top:245.00px;width:1px;height:22.25px;background:#404040"></div>
<div class="abs" style="left:134.00px;top:267.25px;width:1px;height:22.25px;background:#404040"></div>
<div class="abs" style="left:150.34px;top:267.25px;width:1px;height:22.25px;background:#404040"></div>
<div class="abs" style="left:166.68px;top:267.25px;width:1px;height:22.25px;background:#404040"></div>
<div class="abs" style="left:183.02px;top:267.25px;width:1px;height:22.25px;background:#404040"></div>
<div class="abs" style="left:199.36px;top:267.25px;width:1px;height:22.25px;background:#404040"></div>
<div class="abs" style="left:215.70px;top:267.25px;width:1px;height:22.25px;background:#404040"></div>
<div class="abs" style="left:134.00px;top:289.50px;width:1px;height:22.25px;background:#404040"></div>
<div class="abs" style="left:150.34px;top:289.50px;width:1px;height:22.25px;background:#404040"></div>
<div class="abs" style="left:166.68px;top:289.50px;width:1px;height:22.25px;background:#404040"></div>
<div class="abs" style="left:183.02px;top:289.50px;width:1px;height:22.25px;background:#404040"></div>
<div class="abs" style="left:199.36px;top:289.50px;width:1px;height:22.25px;background:#404040"></div>
<div class="abs" style="left:215.70px;top:289.50px;width:1px;height:22.25px;background:#404040"></div>
<div class="abs" style="left:134.00px;top:311.75px;width:1px;height:22.25px;background:#404040"></div>
<div class="abs" style="left:150.34px;top:311.75px;width:1px;height:22.25px;background:#404040"></div>
<div class="abs" style="left:166.68px;top:311.75px;width:1px;height:22.25px;background:#404040"></div>
<div class="abs" style="left:183.02px;top:311.75px;width:1px;height:22.25px;background:#404040"></div>
<div class="abs" style="left:199.36px;top:311.75px;width:1px;height:22.25px;background:#404040"></div>
<div class="abs" style="left:215.70px;top:311.75px;width:1px;height:22.25px;background:#404040"></div>
<div class="abs" style="left:134.00px;top:400.75px;width:1px;height:22.25px;background:#404040"></div>
<div class="abs" style="left:134.00px;top:423.00px;width:1px;height:22.25px;background:#404040"></div>
<div class="abs" style="left:150.34px;top:423.00px;width:1px;height:22.25px;background:#707070"></div>
<div class="abs" style="left:134.00px;top:445.25px;width:1px;height:22.25px;background:#404040"></div>
<div class="abs" style="left:150.34px;top:445.25px;width:1px;height:22.25px;background:#707070"></div>
<div class="abs" style="left:134.00px;top:467.50px;width:1px;height:22.25px;background:#404040"></div>
<div class="abs" style="left:150.34px;top:467.50px;width:1px;height:22.25px;background:#707070"></div>
<div class="abs" style="left:134.00px;top:489.75px;width:1px;height:22.25px;background:#404040"></div>
<div class="abs" style="left:150.34px;top:489.75px;width:1px;height:22.25px;background:#707070"></div>
<div class="abs" style="left:134.00px;top:512.00px;width:1px;height:22.25px;background:#404040"></div>
<div class="abs" style="left:150.34px;top:512.00px;width:1px;height:22.25px;background:#707070"></div>
<div class="abs" style="left:134.00px;top:534.25px;width:1px;height:22.25px;background:#404040"></div>
<div class="abs" style="left:134.00px;top:578.75px;width:1px;height:22.25px;background:#404040"></div>
<div class="abs" style="left:134.00px;top:601.00px;width:1px;height:22.25px;background:#404040"></div>
<div class="abs" style="left:150.34px;top:601.00px;width:1px;height:22.25px;background:#404040"></div>
<div class="abs" style="left:166.68px;top:601.00px;width:1px;height:22.25px;background:#404040"></div>
<div class="abs" style="left:183.02px;top:601.00px;width:1px;height:22.25px;background:#404040"></div>
<div class="abs" style="left:134.00px;top:623.25px;width:1px;height:22.25px;background:#404040"></div>
<div class="abs" style="left:150.34px;top:623.25px;width:1px;height:22.25px;background:#404040"></div>
<div class="abs" style="left:166.68px;top:623.25px;width:1px;height:22.25px;background:#404040"></div>
<div class="abs" style="left:183.02px;top:623.25px;width:1px;height:22.25px;background:#404040"></div>
<div class="abs" style="left:134.00px;top:645.50px;width:1px;height:22.25px;background:#404040"></div>
<div class="abs" style="left:150.34px;top:645.50px;width:1px;height:22.25px;background:#404040"></div>
<div class="abs" style="left:166.68px;top:645.50px;width:1px;height:22.25px;background:#404040"></div>
<div class="abs" style="left:183.02px;top:645.50px;width:1px;height:22.25px;background:#404040"></div>
<div class="abs" style="left:134.00px;top:667.75px;width:1px;height:22.25px;background:#404040"></div>
<div class="abs" style="left:150.34px;top:667.75px;width:1px;height:22.25px;background:#404040"></div>
<div class="abs" style="left:134.00px;top:690.00px;width:1px;height:22.25px;background:#404040"></div>
<div class="abs" style="left:150.34px;top:690.00px;width:1px;height:22.25px;background:#404040"></div>
<div class="abs" style="left:166.68px;top:690.00px;width:1px;height:22.25px;background:#404040"></div>
<div class="abs" style="left:183.02px;top:690.00px;width:1px;height:22.25px;background:#404040"></div>
<div class="ln num" style="top:69.10px">1</div>
<div class="ln num" style="top:91.35px">2</div>
<div class="ln num" style="top:113.60px">3</div>
<div class="ln num" style="top:135.85px">4</div>
<div class="ln num" style="top:158.10px">5</div>
<div class="ln num" style="top:180.35px">6</div>
<div class="ln num" style="top:202.60px">7</div>
<div class="ln num" style="top:224.85px">8</div>
<div class="ln num" style="top:247.10px">9</div>
<div class="ln num" style="top:269.35px">10</div>
<div class="ln num" style="top:291.60px">11</div>
<div class="ln num" style="top:313.85px">12</div>
<div class="ln num" style="top:336.10px">13</div>
<div class="ln num" style="top:358.35px">14</div>
<div class="ln num" style="top:380.60px">15</div>
<div class="ln num" style="top:402.85px">16</div>
<div class="ln num" style="top:425.10px;color:#c6c6c6">17</div>
<div class="ln num" style="top:447.35px">18</div>
<div class="ln num" style="top:469.60px">19</div>
<div class="ln num" style="top:491.85px">20</div>
<div class="ln num" style="top:514.10px">21</div>
<div class="ln num" style="top:536.35px">22</div>
<div class="ln num" style="top:558.60px">23</div>
<div class="ln num" style="top:580.85px">24</div>
<div class="ln num" style="top:603.10px">25</div>
<div class="ln num" style="top:625.35px">26</div>
<div class="ln num" style="top:647.60px">27</div>
<div class="ln num" style="top:669.85px">28</div>
<div class="ln num" style="top:692.10px">29</div>
<div id="code">
<div class="ln" style="top:0.00px">(<span class="k">defpackage</span> <span class="b">cl-debug-time</span></div>
<div class="ln" style="top:22.25px">  (:use :cl)</div>
<div class="ln" style="top:44.50px">  (:import-from #:local-time</div>
<div class="ln" style="top:66.75px">                #:now</div>
<div class="ln" style="top:89.00px">                #:timestamp-difference</div>
<div class="ln" style="top:111.25px">                #:format-timestring)</div>
<div class="ln" style="top:133.50px">  (:export :with-measure-time</div>
<div class="ln" style="top:155.75px">           :with-timestamp</div>
<div class="ln" style="top:178.00px">           :debug-time-reader</div>
<div class="ln" style="top:200.25px">           :measure-time</div>
<div class="ln" style="top:222.50px">           :timestamp</div>
<div class="ln" style="top:244.75px">           :enable-annotation))</div>
<div class="ln" style="top:267.00px">(<span class="k">in-package</span> <span class="t">:cl-debug-time</span>)</div>
<div class="ln" style="top:289.25px"></div>
<div class="ln" style="top:311.50px">(<span class="k">defun</span> <span class="y">%second-per-unit</span> (<span class="b">unit</span>)</div>
<div class="ln" style="top:333.75px">  (<span class="k">ecase</span> <span class="b">unit</span></div>
<div class="ln" style="top:356.00px">    ((:h :hour) (<span class="k">/</span> <span class="n">1.0</span> <span class="n">3600.0</span>))</div>
<div class="ln" style="top:378.25px">    ((:m :min :minute) (<span class="k">/</span> <span class="n">1.0</span> <span class="n">60.0</span>))</div>
<div class="ln" style="top:400.50px">    ((:s :sec :second) <span class="n">1.0</span>)</div>
<div class="ln" style="top:422.75px">    ((:ms :msec :millisecond) <span class="n">1000.0</span>)</div>
<div class="ln" style="top:445.00px">    ((:us :usec :microsecond) <span class="n">1000000.0</span>)))</div>
<div class="ln" style="top:467.25px"></div>
<div class="ln" style="top:489.50px">(<span class="k">defmacro</span> <span class="y">with-measure-time</span> (<span class="b">args</span> <span class="b">body</span>)</div>
<div class="ln" style="top:511.75px">  (<span class="k">let</span> ((<span class="y">start</span> (<span class="k">gensym</span>))</div>
<div class="ln" style="top:534.00px">        (<span class="y">end</span> (<span class="k">gensym</span>))</div>
<div class="ln" style="top:556.25px">        (<span class="y">message</span> (<span class="k">gensym</span>))</div>
<div class="ln" style="top:578.50px">        (<span class="y">unit</span> (<span class="k">gensym</span>)))</div>
<div class="ln" style="top:600.75px">    <span class="o">`(let ((</span><span class="b">,start</span><span class="o"> (now)))</span></div>
<div class="ln" style="top:623.00px">       <span class="o">(unwind-protect </span><span class="b">,body</span></div>
</div>
<div id="status" class="abs"></div>
<div class="ui" style="left:37px;top:709px;font-size:14px;color:#fff;line-height:18px">master</div>
<div class="ui" style="left:155px;top:709px;font-size:14px;color:#fff;line-height:18px">0</div>
<div class="ui" style="left:185px;top:709px;font-size:14px;color:#fff;line-height:18px">0</div>
<div class="ui" style="left:1037px;top:709px;font-size:14px;color:#fff;line-height:18px;letter-spacing:-0.45px">UTF-8</div>
<div class="ui" style="left:1093px;top:709px;font-size:14px;color:#fff;line-height:18px;letter-spacing:-0.8px">LF</div>
<div class="ui" style="left:1126px;top:709px;font-size:14px;color:#fff;line-height:18px">Common Lisp</div>

<svg width="1300" height="26" style="left:0;top:705px" fill="none" stroke="#ffffff" stroke-width="1.4" stroke-linecap="round" stroke-linejoin="round">
 <!-- branch -->
 <circle cx="21.6" cy="7.3" r="2.2"/>
 <circle cx="21.6" cy="18.9" r="2.2"/>
 <circle cx="29.6" cy="10.4" r="2.2"/>
 <path d="M21.6,9.5 V16.7 M29.2,12.6 C28.8,15 25,14.8 22.3,16.6"/>
 <!-- sync -->
 <path d="M103.4,10.8 A5.6,5.6 0 0 1 113.9,11" stroke-width="1.5"/>
 <path d="M113.6,15.2 A5.6,5.6 0 0 1 103.1,15" stroke-width="1.5"/>
 <path d="M111,11.3 H116.8 L113.9,14.6 Z M100.2,14.7 H106 L103.1,11.4 Z" fill="#fff" stroke="none"/>
 <!-- error -->
 <circle cx="143.6" cy="13" r="6.8"/>
 <path d="M140.8,10.2 L146.4,15.8 M146.4,10.2 L140.8,15.8"/>
 <!-- warning -->
 <path d="M174.6,6 L181.6,19.8 H167.6 Z"/>
 <path d="M174.6,10.5 V15.3 M174.6,17.2 V17.8"/>
 <!-- feedback -->
 <circle cx="1236.8" cy="12.4" r="2.3"/>
 <path d="M1232.2,20.6 C1232.6,17.6 1234.4,16 1236.8,16 C1239.2,16 1241,17.6 1241.4,20.6"/>
 <path d="M1236,7.8 V5.6 H1246.6 V13 H1243 L1241.4,14.6"/>
 <!-- bell -->
 <path d="M1268.4,17.3 Q1269.8,16 1269.8,14 V10.8 C1269.8,7.4 1271.6,5.6 1274.2,5.6 C1276.8,5.6 1278.6,7.4 1278.6,10.8 V14 Q1278.6,16 1280,17.3 Z"/>
 <path d="M1272.8,19 Q1274.2,20.6 1275.6,19" />
</svg>
<div class="abs" style="left:1293.4px;top:706.5px;width:7px;height:24.5px;background:#f0f0f0"></div>

<svg width="1300" height="26" style="left:0;top:705px" fill="none" stroke="#f4eef6" stroke-width="1.4" stroke-linecap="round" stroke-linejoin="round">
 <!-- 行 -->
 <path d="M854.8,6.6 L851,10.2 M855.8,10.6 L850.6,15.2 M853.8,12.8 V19.4 M857.2,8 H862.6 M856.6,12 H863 M860,12 V18.8 Q860,19.4 858.4,19"/>
 <!-- 、 -->
 <path d="M885.4,13.4 L888.8,17.6"/>
 <!-- 列 -->
 <path d="M898,8 H905 M901.2,8 Q900.6,14 897.8,18.4 M900.6,11.4 H904.4 Q903.2,16.6 898.6,19.2 M899.4,13.8 L901,15.2 M906.6,9.6 V16.2 M910,6.4 V18.6 Q910,19.6 908.2,19"/>
 <!-- スペース -->
 <path d="M952,8.3 H959.6 Q956.8,14.2 951.2,18 M956.2,13.4 L961.4,18"/>
 <path d="M963.4,14.8 L968.8,9.8 L975,17"/>
 <circle cx="973.4" cy="9.2" r="1.2" stroke-width="0.9"/>
 <path d="M978,12.4 H988.6"/>
 <path d="M992.4,8.3 H999.8 Q997,14.2 991.4,18 M996.4,13.4 L1001.6,18"/>
</svg>
<div class="ui" style="left:868px;top:709px;font-size:14px;color:#fff;line-height:18px;letter-spacing:-0.6px">17</div>
<div class="ui" style="left:915px;top:709px;font-size:14px;color:#fff;line-height:18px">32</div>
<div class="ui" style="left:1004px;top:709px;font-size:14px;color:#fff;line-height:18px">: 2</div>
</body></html>
